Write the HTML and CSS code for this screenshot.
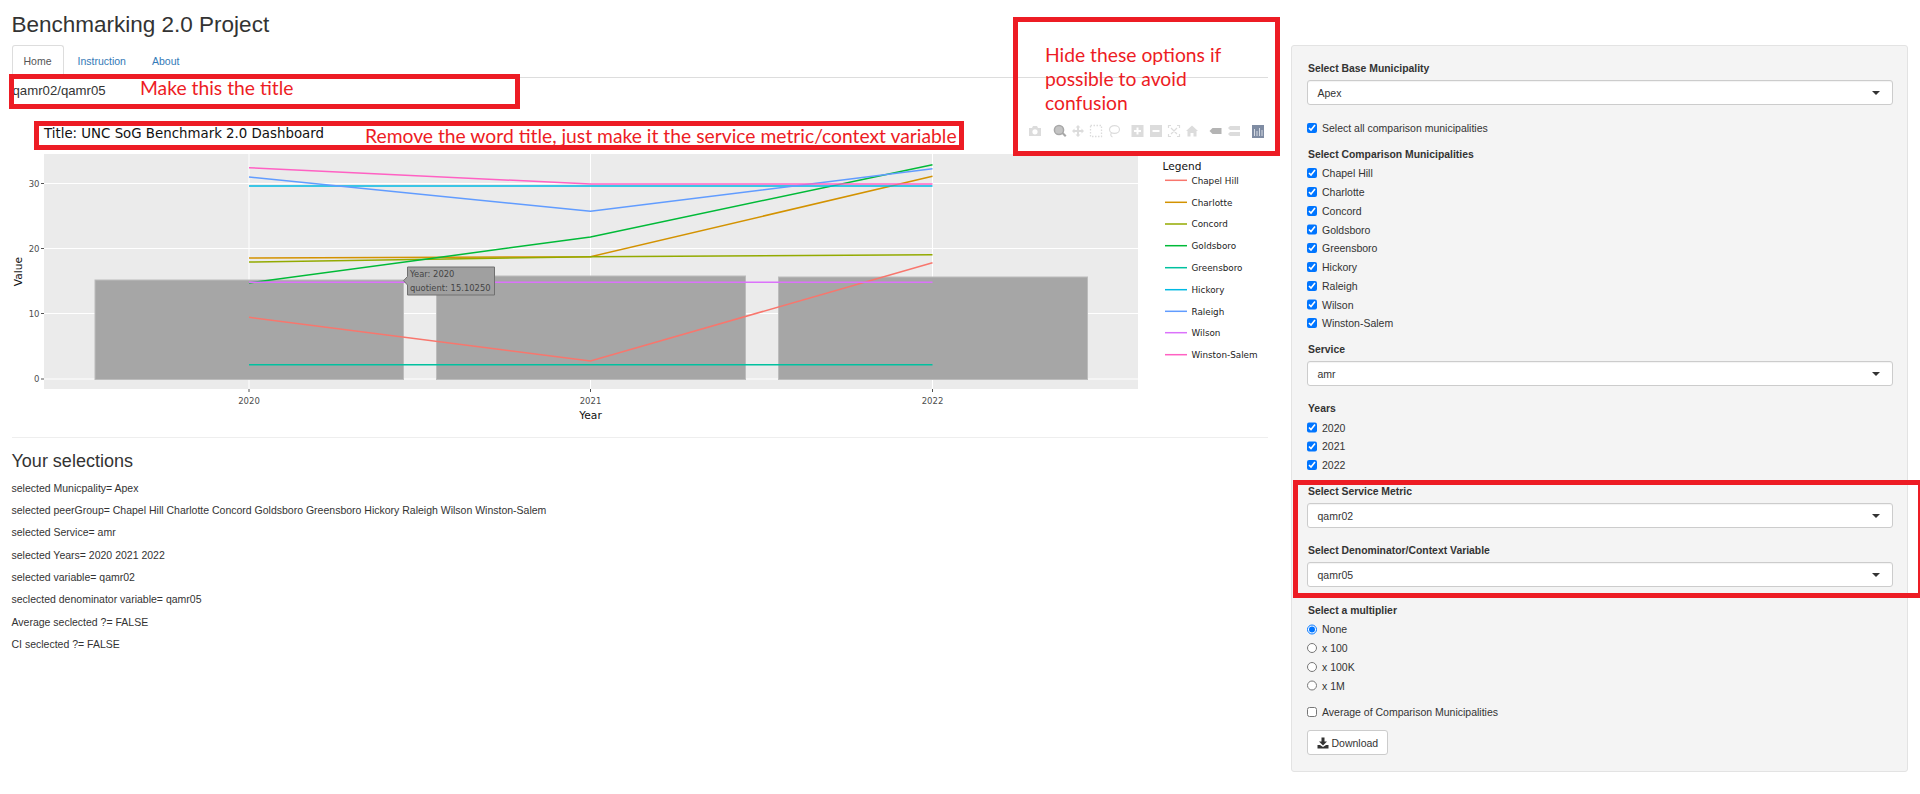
FILE: index.html
```html
<!DOCTYPE html>
<html lang="en">
<head>
<meta charset="utf-8">
<title>Benchmarking 2.0 Project</title>
<link rel="stylesheet" href="styles.css">
</head>
<body>
<div class="page">
  <h2 class="app-title">Benchmarking 2.0 Project</h2>
  <div class="layout">
    <main class="main">
      <ul class="tabs">
        <li class="tab active">Home</li>
        <li class="tab">Instruction</li>
        <li class="tab">About</li>
      </ul>
      <div class="ratio">qamr02/qamr05</div>
      <svg class="plot" viewBox="12 110 1256 320" width="1256" height="320" role="img" aria-label="Benchmark chart">
        <text class="plot-title" x="44" y="138">Title: UNC SoG Benchmark 2.0 Dashboard</text>
        <rect class="panel" x="44" y="154" width="1094" height="235"/>
        <path class="grid" d="M44 183.5H1138M44 248.5H1138M44 313.5H1138M44 379H1138M249 154V389M590.500 154V389M932.500 154V389"/>
        <path class="tickmark" d="M41 183.500H44M41 248.500H44M41 313.500H44M41 379H44M249 389V392M590.500 389V392M932.500 389V392"/>
        <rect class="bar" x="95" y="280" width="308.500" height="99.500"/>
        <rect class="bar" x="436.500" y="276" width="309" height="103.500"/>
        <rect class="bar" x="778.500" y="277" width="309" height="102.500"/>
        <polyline class="series s-chapel" points="249,317.300 590.500,361 932.500,262.700"/>
        <polyline class="series s-charlotte" points="249,258 590.500,256.700 932.500,176.300"/>
        <polyline class="series s-concord" points="249,262 590.500,256.700 932.500,254.700"/>
        <polyline class="series s-goldsboro" points="249,283 590.500,237 932.500,164.700"/>
        <polyline class="series s-greensboro" points="249,364.700 590.500,364.700 932.500,364.700"/>
        <polyline class="series s-hickory" points="249,186 590.500,186 932.500,186"/>
        <polyline class="series s-raleigh" points="249,177 590.500,211.300 932.500,168.700"/>
        <polyline class="series s-wilson" points="249,282.300 590.500,282.300 932.500,282.300"/>
        <polyline class="series s-winston" points="249,167.700 590.500,184 932.500,184"/>
        <text class="tick end" x="39.500" y="186.500">30</text>
        <text class="tick end" x="39.500" y="251.500">20</text>
        <text class="tick end" x="39.500" y="316.500">10</text>
        <text class="tick end" x="39.500" y="382">0</text>
        <text class="tick mid" x="249" y="403.500">2020</text>
        <text class="tick mid" x="590.500" y="403.500">2021</text>
        <text class="tick mid" x="932.500" y="403.500">2022</text>
        <text class="axis-title mid" x="590.500" y="419">Year</text>
        <text class="axis-title mid" transform="translate(22 271.500) rotate(-90)">Value</text>
        <text class="legend-title" x="1162.500" y="170">Legend</text>
        <line class="series s-chapel" x1="1165" x2="1187" y1="180.300" y2="180.300"/><text class="legend-item" x="1191.500" y="183.500">Chapel Hill</text>
        <line class="series s-charlotte" x1="1165" x2="1187" y1="202.300" y2="202.300"/><text class="legend-item" x="1191.500" y="205.500">Charlotte</text>
        <line class="series s-concord" x1="1165" x2="1187" y1="224" y2="224"/><text class="legend-item" x="1191.500" y="227.200">Concord</text>
        <line class="series s-goldsboro" x1="1165" x2="1187" y1="245.700" y2="245.700"/><text class="legend-item" x="1191.500" y="248.900">Goldsboro</text>
        <line class="series s-greensboro" x1="1165" x2="1187" y1="267.700" y2="267.700"/><text class="legend-item" x="1191.500" y="270.900">Greensboro</text>
        <line class="series s-hickory" x1="1165" x2="1187" y1="289.700" y2="289.700"/><text class="legend-item" x="1191.500" y="292.900">Hickory</text>
        <line class="series s-raleigh" x1="1165" x2="1187" y1="311.300" y2="311.300"/><text class="legend-item" x="1191.500" y="314.500">Raleigh</text>
        <line class="series s-wilson" x1="1165" x2="1187" y1="332.700" y2="332.700"/><text class="legend-item" x="1191.500" y="335.900">Wilson</text>
        <line class="series s-winston" x1="1165" x2="1187" y1="354.700" y2="354.700"/><text class="legend-item" x="1191.500" y="357.900">Winston-Salem</text>

        <path class="tip" d="M407.500 267H494.500V295H407.500V285L403.500 280.700L407.500 276.500Z"/>
        <text class="tip-text" x="410" y="277">Year: 2020</text>
        <text class="tip-text" x="410" y="291">quotient: 15.10250</text>

        <g class="mode">
          <path transform="translate(1029 125)" fill-rule="evenodd" d="M0 3H3L4 1H8L9 3H12V11H0ZM6 4.200A2.600 2.600 0 1 0 6 9.400A2.600 2.600 0 0 0 6 4.200Z"/>
          <g transform="translate(1054 125)" class="mode-active">
            <circle cx="5" cy="5" r="4.600"/>
            <path d="M7.500 8.500L9 7L12.500 10.500L11 12Z"/>
          </g>
          <path transform="translate(1072 125)" d="M6 0L8.500 2.500H7V5H9.500V3.500L12 6L9.500 8.500V7H7V9.500H8.500L6 12L3.500 9.500H5V7H2.500V8.500L0 6L2.500 3.500V5H5V2.500H3.500Z"/>
          <rect class="mode-dash" transform="translate(1090.500 125.500)" width="11" height="11"/>
          <g class="mode-line" transform="translate(1107.500 125)">
            <ellipse cx="7" cy="4.500" rx="5" ry="3.800"/>
            <path d="M4 8C2.500 9.500 3.500 11.500 5 12"/>
          </g>
          <path transform="translate(1131.500 125)" fill-rule="evenodd" d="M0 0H12V12H0ZM5 2.500V5H2.500V7H5V9.500H7V7H9.500V5H7V2.500Z"/>
          <path transform="translate(1150 125)" fill-rule="evenodd" d="M0 0H12V12H0ZM2.500 5V7H9.500V5Z"/>
          <g class="mode-line" transform="translate(1168 125)">
            <path d="M0.500 3V0.500H3M9 0.500H11.500V3M11.500 9V11.500H9M3 11.500H0.500V9M3 3L9 9M9 3L3 9"/>
          </g>
          <path transform="translate(1186 125)" d="M6 0.500L12 6H10.500V11.500H7.500V8H4.500V11.500H1.500V6H0Z"/>
          <path class="mode-mid" transform="translate(1209.500 127)" d="M0 4L3 1H12V7H3Z"/>
          <path transform="translate(1228 125)" d="M2 1H12V5H2L0 3ZM2 7H12V11H2L0 9Z"/>
          <g transform="translate(1252 125)">
            <rect class="logo" width="12" height="13"/>
            <path class="logo-bars" d="M2 4H3V11H2ZM4.500 6H5.500V11H4.500ZM7 3H8V11H7ZM9.500 5H10.500V11H9.500Z"/>
          </g>
        </g>
      </svg>
      <hr class="rule">
      <h3 class="sel-title">Your selections</h3>
      <p class="sel">selected Municpality= Apex</p>
      <p class="sel">selected peerGroup= Chapel Hill Charlotte Concord Goldsboro Greensboro Hickory Raleigh Wilson Winston-Salem</p>
      <p class="sel">selected Service= amr</p>
      <p class="sel">selected Years= 2020 2021 2022</p>
      <p class="sel">selected variable= qamr02</p>
      <p class="sel">seclected denominator variable= qamr05</p>
      <p class="sel">Average seclected ?= FALSE</p>
      <p class="sel">CI seclected ?= FALSE</p>
    </main>
    <aside class="side">
      <form class="well">
        <div class="field-label">Select Base Municipality</div>
        <div class="select">Apex</div>
        <label class="opt gap-all"><input type="checkbox" checked>Select all comparison municipalities</label>
        <div class="field-label gap-10">Select Comparison Municipalities</div>
        <div class="opts">
          <label class="opt"><input type="checkbox" checked>Chapel Hill</label>
          <label class="opt"><input type="checkbox" checked>Charlotte</label>
          <label class="opt"><input type="checkbox" checked>Concord</label>
          <label class="opt"><input type="checkbox" checked>Goldsboro</label>
          <label class="opt"><input type="checkbox" checked>Greensboro</label>
          <label class="opt"><input type="checkbox" checked>Hickory</label>
          <label class="opt"><input type="checkbox" checked>Raleigh</label>
          <label class="opt"><input type="checkbox" checked>Wilson</label>
          <label class="opt"><input type="checkbox" checked>Winston-Salem</label>
        </div>
        <div class="field-label gap-10">Service</div>
        <div class="select">amr</div>
        <div class="field-label gap-14">Years</div>
        <div class="opts">
          <label class="opt"><input type="checkbox" checked>2020</label>
          <label class="opt"><input type="checkbox" checked>2021</label>
          <label class="opt"><input type="checkbox" checked>2022</label>
        </div>
        <div class="field-label gap-10">Select Service Metric</div>
        <div class="select">qamr02</div>
        <div class="field-label gap-14">Select Denominator/Context Variable</div>
        <div class="select">qamr05</div>
        <div class="field-label gap-15">Select a multiplier</div>
        <div class="opts">
          <label class="opt"><input type="radio" name="mult" checked>None</label>
          <label class="opt"><input type="radio" name="mult">x 100</label>
          <label class="opt"><input type="radio" name="mult">x 100K</label>
          <label class="opt"><input type="radio" name="mult">x 1M</label>
        </div>
        <label class="opt gap-avg"><input type="checkbox">Average of Comparison Municipalities</label>
        <div class="btn">
          <svg class="btn-icon" viewBox="0 0 12 12" width="12" height="12" aria-hidden="true"><path d="M4.500 0.500H7.500V4.500H10L6 8.500L2 4.500H4.500Z"/><path d="M0.500 8H3L6 10L9 8H11.500V11.500H0.500Z"/></svg>
          Download
        </div>
      </form>
    </aside>
  </div>

  <div class="note note-ratio"><span class="note-text">Make this the title</span></div>
  <div class="note note-title"><span class="note-text">Remove the word title, just make it the service metric/context variable</span></div>
  <div class="note note-modebar"><span class="note-text">Hide these options if possible to avoid confusion</span></div>
  <div class="note note-metric"></div>
</div>
</body>
</html>
```

FILE: styles.css
```css
* { box-sizing: border-box; }
html, body { margin: 0; padding: 0; background: #fff; }
body { font-family: "Liberation Sans", Arial, sans-serif; font-size: 10.500px; line-height: 16px; color: #333; }

.page { position: relative; width: 1920px; height: 794px; overflow: hidden; }

.app-title { margin: 0; padding: 11.500px 11.500px 7.100px; font-size: 22.500px; font-weight: 400; line-height: 26.400px; color: #333; }
.layout { display: flex; }
.main { width: 1280px; padding: 0 12px 0 11.500px; }
.side { width: 640px; padding: 0 12px 0 11px; }

.tabs { display: flex; height: 33px; margin: 0; padding: 0; list-style: none; border-bottom: 1px solid #ddd; }
.tab { height: 32px; margin-right: 2px; padding: 7px 11px; color: #337ab7; border: 1px solid transparent; }
.tab.active { color: #555; background: #fff; border-color: #ddd #ddd #fff; border-radius: 3px 3px 0 0; height: 33px; }

.ratio { margin-top: 5px; padding-left: 1px; font-size: 13.200px; line-height: 16px; color: #333; }
.plot { display: block; margin: 11px 0 0 0.500px; overflow: visible; }

.plot-title { font-family: "DejaVu Sans", Verdana, sans-serif; font-size: 13.350px; fill: #111; }
.panel { fill: #ebebeb; }
.grid { fill: none; stroke: #fff; stroke-width: 1; }
.tickmark { fill: none; stroke: #555; stroke-width: 1; }
.bar { fill: #a6a6a6; stroke: #bcbcbc; stroke-width: 1; }
.series { fill: none; stroke-width: 1.500; }
.s-chapel { stroke: #f8766d; }
.s-charlotte { stroke: #d39200; }
.s-concord { stroke: #93aa00; }
.s-goldsboro { stroke: #00ba38; }
.s-greensboro { stroke: #00c19f; }
.s-hickory { stroke: #00b9e3; }
.s-raleigh { stroke: #619cff; }
.s-wilson { stroke: #db72fb; }
.s-winston { stroke: #ff61c3; }
.tick { font-family: "DejaVu Sans", Verdana, sans-serif; font-size: 8.500px; fill: #4d4d4d; }
.end { text-anchor: end; }
.mid { text-anchor: middle; }
.axis-title { font-family: "DejaVu Sans", Verdana, sans-serif; font-size: 10.700px; fill: #111; }
.legend-title { font-family: "DejaVu Sans", Verdana, sans-serif; font-size: 10.600px; fill: #111; }
.legend-item { font-family: "DejaVu Sans", Verdana, sans-serif; font-size: 8.800px; fill: #222; }
.tip { fill: #a0a0a0; stroke: #707070; stroke-width: 1; }
.tip-text { font-family: "DejaVu Sans", Verdana, sans-serif; font-size: 8.400px; fill: #444; }

.mode { fill: #dcdcdc; }
.mode-active { fill: #a8a8a8; }
.mode-active circle { stroke: #a8a8a8; stroke-width: 1.500; fill: #c4c4c4; }
.mode-dash { fill: none; stroke: #dcdcdc; stroke-width: 1.300; stroke-dasharray: 1.500 1.500; }
.mode-line { fill: none; stroke: #dcdcdc; stroke-width: 1.200; }
.mode-mid { fill: #b4b4b4; }
.logo { fill: #7f8ca3; }
.logo-bars { fill: #d5dae3; }

.rule { height: 1px; margin: 7px 0 0 0.500px; border: 0; background: #eee; }
.sel-title { margin: 13px 0 7.500px; font-size: 18px; font-weight: 400; line-height: 21px; color: #333; }
.sel { margin: 0 0 6.400px; line-height: 16px; }

.well { display: flex; flex-direction: column; align-items: flex-start; height: 727px; padding: 14px 14px 14px 14.500px; background: #f4f4f4; border: 1px solid #e3e3e3; border-radius: 3px; }
.field-label { padding: 0.800px 0 0 1.500px; font-size: 10.400px; font-weight: 700; line-height: 16px; margin-bottom: 3.200px; }
.gap-10 { margin-top: 10px; }
.gap-14 { margin-top: 14px; }
.gap-15 { margin-top: 15px; }
.select { position: relative; width: 100%; height: 25px; padding: 4px 10px; background: #fff; border: 1px solid #ccc; border-radius: 3px; line-height: 16px; box-shadow: inset 0 1px 1px rgba(0, 0, 0, .05); }
.select::after { content: ""; position: absolute; top: 10px; right: 12px; border-style: solid; border-width: 4px 4px 0; border-color: #333 transparent transparent; }
.opts { display: flex; flex-direction: column; gap: 2.750px; margin-top: -0.700px; }
.opt { display: flex; align-items: center; line-height: 16px; height: 16px; font-weight: 400; }
.opt input { flex: none; width: 10.400px; height: 10.400px; margin: 0 4.800px 0 0.300px; }
.gap-all { margin-top: 15px; }
.gap-avg { margin-top: 10.400px; }
.btn { display: flex; align-items: center; gap: 3px; height: 25px; margin-top: 10.200px; padding: 0 9px; background: #fff; border: 1px solid #ccc; border-radius: 3px; color: #333; }
.btn-icon { fill: #333; }

.note { position: absolute; border: 5px solid #ed1c24; }
.note-text { font-family: Lato, "Open Sans", sans-serif; color: #ed1c24; }
.note-ratio { left: 9px; top: 74px; width: 511px; height: 35px; }
.note-ratio .note-text { position: absolute; left: 126px; top: -1px; font-size: 19.300px; line-height: 20px; }
.note-title { left: 34px; top: 121px; width: 930px; height: 29px; }
.note-title .note-text { position: absolute; left: 326px; top: 0; font-size: 19.300px; line-height: 20px; white-space: nowrap; }
.note-modebar { left: 1013px; top: 17px; width: 267px; height: 139px; }
.note-modebar .note-text { display: block; width: 215px; margin: 21px 0 0 27px; font-size: 19.300px; line-height: 24px; }
.note-metric { left: 1293px; top: 480px; width: 630px; height: 117.500px; }
```
